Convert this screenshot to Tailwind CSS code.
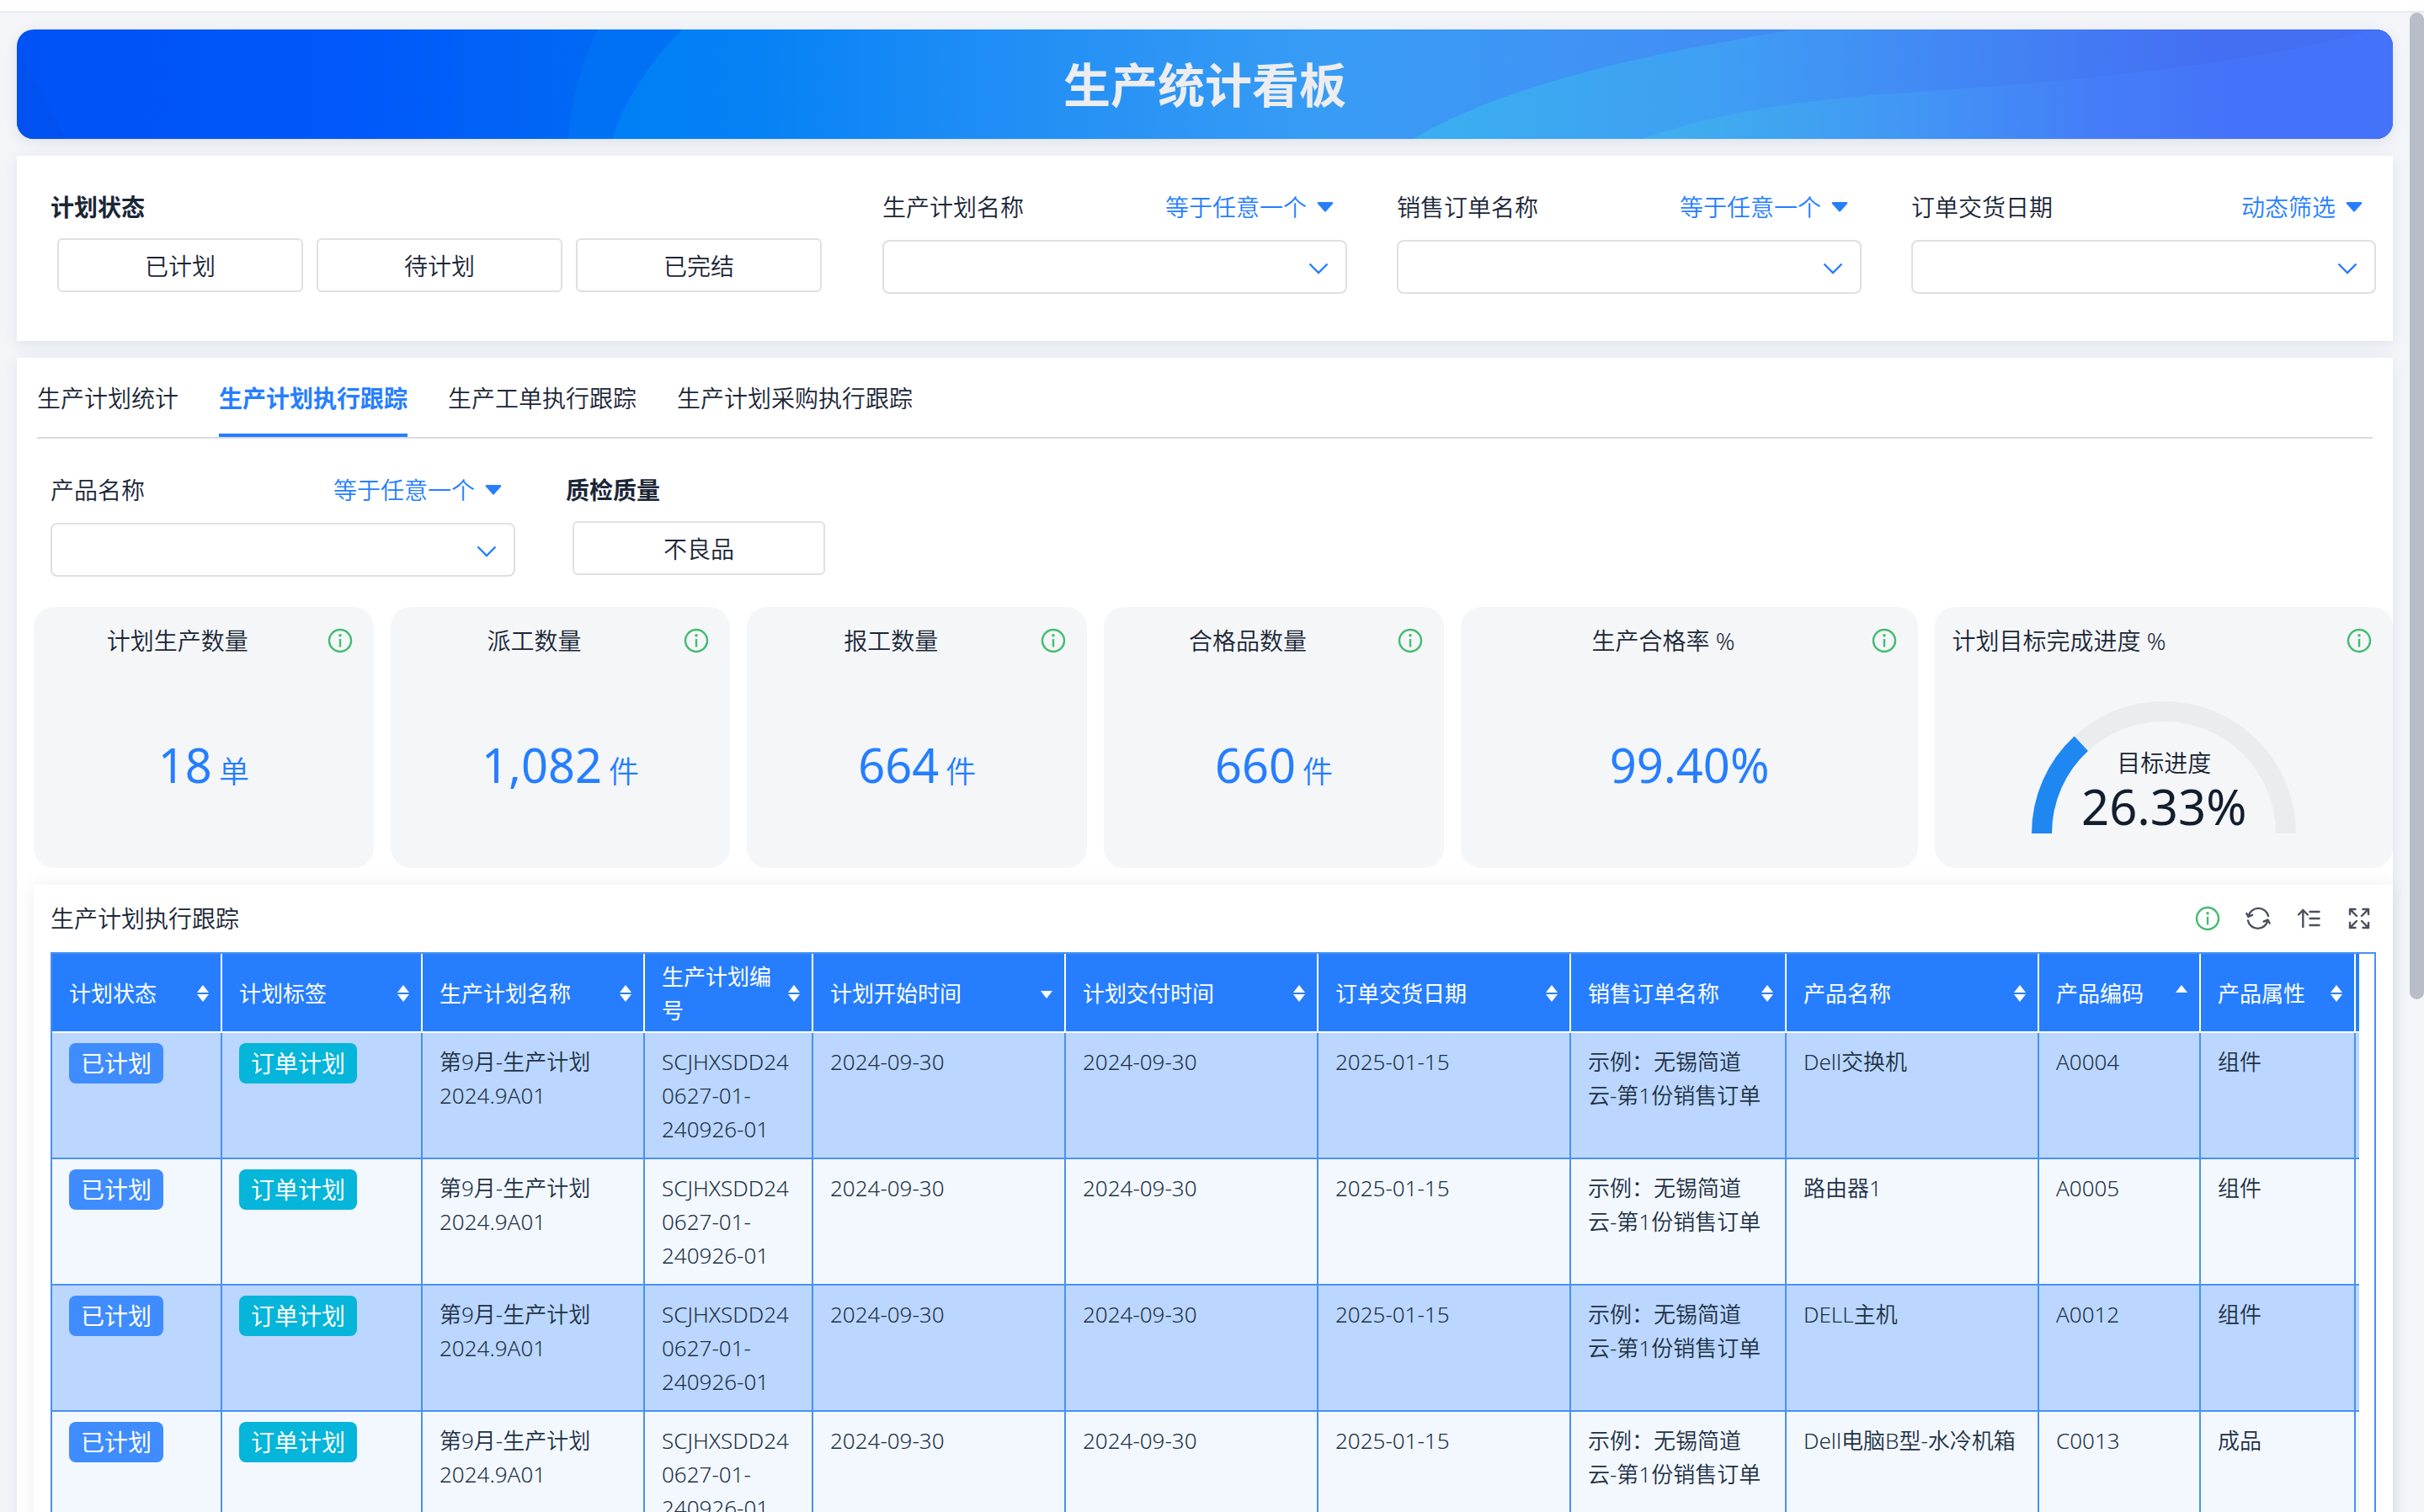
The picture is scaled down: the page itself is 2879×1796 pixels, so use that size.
<!DOCTYPE html>
<html lang="zh-CN">
<head>
<meta charset="utf-8">
<title>生产统计看板</title>
<script src="https://cdn.jsdelivr.net/npm/@tailwindcss/browser@4"></script>
</head>
<body class="h-screen overflow-hidden bg-[#f3f5f9] font-['Noto_Sans','Noto_Sans_CJK_SC',sans-serif] text-[28px] leading-10 font-[350] text-[#1a2636]">

<svg class="hidden">
  <symbol id="info" viewBox="0 0 32 32"><circle cx="16" cy="16" r="13" fill="none" stroke="#45bb72" stroke-width="2.4"/><circle cx="16" cy="9.800" r="1.800" fill="#45bb72"/><path d="M16 14v9.500" stroke="#45bb72" stroke-width="2.400"/></symbol>
  <symbol id="caret" viewBox="0 0 20 12"><path d="M2 0h16q2 0 1 2l-8 9q-1 1-2 0L1 2Q0 0 2 0z" fill="#267eff"/></symbol>
  <symbol id="chevron" viewBox="0 0 24 14"><path d="M1.500 1.500 12 12 22.500 1.500" fill="none" stroke="#267eff" stroke-width="2.400"/></symbol>
  <symbol id="sort" viewBox="0 0 14 20"><path d="M7 0l7 9H0zM7 20l7-9H0z" fill="#fff"/></symbol>
  <symbol id="sort-up" viewBox="0 0 14 20"><path d="M7 0l7 9H0z" fill="#fff"/></symbol>
  <symbol id="sort-down" viewBox="0 0 14 20"><path d="M7 16l7-9H0z" fill="#fff"/></symbol>
</svg>

<header class="h-[15px] border-b-2 border-[#e8e9eb] bg-white"></header>

<main class="flex flex-col gap-5 pt-5 pr-[37px] pl-5">

  <section class="relative flex h-[130px] items-center justify-center overflow-hidden rounded-[20px] shadow-[0_4px_16px_rgba(50,60,110,0.10)]">
    <svg class="absolute inset-0 h-full w-full" viewBox="0 0 2822 130" preserveAspectRatio="none">
      <defs>
        <linearGradient id="g0" gradientUnits="userSpaceOnUse" x1="0" x2="2822" y1="0" y2="0"><stop offset="0" stop-color="#0052f6"/><stop offset=".14" stop-color="#0058fa"/><stop offset=".24" stop-color="#0068f5"/></linearGradient>
        <linearGradient id="g1" gradientUnits="userSpaceOnUse" x1="700" x2="2822" y1="0" y2="0"><stop offset="0" stop-color="#007ff6"/><stop offset=".08" stop-color="#0581f5"/><stop offset=".2" stop-color="#1d8cf5"/><stop offset=".4" stop-color="#389cf5"/><stop offset=".55" stop-color="#4093f5"/><stop offset="1" stop-color="#456ef3"/></linearGradient>
        <linearGradient id="g2" gradientUnits="userSpaceOnUse" x1="1660" x2="2600" y1="0" y2="0"><stop offset="0" stop-color="#3aaff0"/><stop offset=".38" stop-color="#3f9ff3"/><stop offset=".68" stop-color="#4287f5"/><stop offset="1" stop-color="#446ff2"/></linearGradient>
        <linearGradient id="g3" gradientUnits="userSpaceOnUse" x1="1930" x2="2640" y1="0" y2="0"><stop offset="0" stop-color="#3faeee"/><stop offset=".12" stop-color="#3fabef"/><stop offset=".45" stop-color="#4296f5"/><stop offset=".75" stop-color="#447ef7"/><stop offset="1" stop-color="#4472f9"/></linearGradient>
      </defs>
      <path d="M0 0H2822V130H0z" fill="url(#g0)"/>
      <path d="M10 40Q32 80 58 130H0V20z" fill="#0051f0"/>
      <path d="M690 0Q660 60 655 130H900V0z" fill="#0071f5"/>
      <path d="M790 0Q730 60 707 130H2822V0z" fill="url(#g1)"/>
      <path d="M1659 130Q1790 50 2114 0H2822V130z" fill="url(#g2)"/>
      <path d="M1930 130C2030 95 2137 82 2260 74S2650 45 2800 0H2822V130z" fill="url(#g3)"/>
    </svg>
    <h1 class="relative text-[56px] leading-[72px] font-bold text-[#ededf0]">生产统计看板</h1>
  </section>

  <section class="flex h-[220px] bg-white pt-[41px] pr-5 pl-10 shadow-[0_4px_16px_rgba(50,60,110,0.10)]">
    <div class="w-[988px] shrink-0">
      <h2 class="font-bold">计划状态</h2>
      <div class="mt-[17px] ml-2 flex gap-4">
        <button class="h-16 w-[292px] rounded-md border-2 border-[#dfe0e2] pt-0.5">已计划</button>
        <button class="h-16 w-[292px] rounded-md border-2 border-[#dfe0e2] pt-0.5">待计划</button>
        <button class="h-16 w-[292px] rounded-md border-2 border-[#dfe0e2] pt-0.5">已完结</button>
      </div>
    </div>
    <div class="grid flex-1 grid-cols-3 gap-[59px]">
      <div>
        <div class="flex justify-between pr-4"><label for="plan">生产计划名称</label><button class="flex items-center gap-3 text-[#267eff]">等于任意一个<svg class="h-3 w-5"><use href="#caret"/></svg></button></div>
        <div class="relative mt-[19px]"><select id="plan" class="block h-16 w-full appearance-none rounded-lg border-2 border-[#dfe0e2] bg-white"></select><svg class="pointer-events-none absolute top-[27px] right-[22px] h-[14px] w-6"><use href="#chevron"/></svg></div>
      </div>
      <div>
        <div class="flex justify-between pr-4"><label for="order">销售订单名称</label><button class="flex items-center gap-3 text-[#267eff]">等于任意一个<svg class="h-3 w-5"><use href="#caret"/></svg></button></div>
        <div class="relative mt-[19px]"><select id="order" class="block h-16 w-full appearance-none rounded-lg border-2 border-[#dfe0e2] bg-white"></select><svg class="pointer-events-none absolute top-[27px] right-[22px] h-[14px] w-6"><use href="#chevron"/></svg></div>
      </div>
      <div>
        <div class="flex justify-between pr-4"><label for="date">订单交货日期</label><button class="flex items-center gap-3 text-[#267eff]">动态筛选<svg class="h-3 w-5"><use href="#caret"/></svg></button></div>
        <div class="relative mt-[19px]"><select id="date" class="block h-16 w-full appearance-none rounded-lg border-2 border-[#dfe0e2] bg-white"></select><svg class="pointer-events-none absolute top-[27px] right-[22px] h-[14px] w-6"><use href="#chevron"/></svg></div>
      </div>
    </div>
  </section>

  <section class="bg-white shadow-[0_4px_16px_rgba(50,60,110,0.10)]">
    <nav class="mx-6 flex gap-12 border-b-2 border-[#d9dbe0]">
      <button class="h-[94px] border-b-4 border-transparent pt-1.5">生产计划统计</button>
      <button class="h-[94px] border-b-4 border-[#267eff] pt-1.5 font-bold text-[#267eff]">生产计划执行跟踪</button>
      <button class="h-[94px] border-b-4 border-transparent pt-1.5">生产工单执行跟踪</button>
      <button class="h-[94px] border-b-4 border-transparent pt-1.5">生产计划采购执行跟踪</button>
    </nav>

    <div class="flex gap-[60px] pt-[41px] pl-10">
      <div class="w-[552px]">
        <div class="flex justify-between pr-4"><label for="product">产品名称</label><button class="flex items-center gap-3 text-[#267eff]">等于任意一个<svg class="h-3 w-5"><use href="#caret"/></svg></button></div>
        <div class="relative mt-[19px]"><select id="product" class="block h-16 w-full appearance-none rounded-lg border-2 border-[#dfe0e2] bg-white"></select><svg class="pointer-events-none absolute top-[27px] right-[22px] h-[14px] w-6"><use href="#chevron"/></svg></div>
      </div>
      <div>
        <h2 class="font-bold">质检质量</h2>
        <button class="mt-[17px] ml-2 h-16 w-[300px] rounded-md border-2 border-[#dfe0e2] pt-0.5">不良品</button>
      </div>
    </div>

    <div class="mt-9 grid grid-cols-[202fr_202fr_202fr_202fr_272fr_272fr] gap-5 pl-5 text-center [&>article]:flex [&>article]:h-[310px] [&>article]:flex-col [&>article]:rounded-3xl [&>article]:bg-[#f4f6f8] [&>article]:pt-5">
      <article>
        <div class="flex items-center pr-6 pl-5"><h3 class="flex-1 pr-[26px]">计划生产数量</h3><svg class="h-8 w-8"><use href="#info"/></svg></div>
        <p class="flex flex-1 items-center justify-center pt-1 text-[56px] font-normal text-[#267eff]"><span>18<small class="ml-2 text-[36px] leading-4 font-[350]">单</small></span></p>
      </article>
      <article>
        <div class="flex items-center pr-6 pl-5"><h3 class="flex-1 pr-[26px]">派工数量</h3><svg class="h-8 w-8"><use href="#info"/></svg></div>
        <p class="flex flex-1 items-center justify-center pt-1 text-[56px] font-normal text-[#267eff]"><span>1,082<small class="ml-2 text-[36px] leading-4 font-[350]">件</small></span></p>
      </article>
      <article>
        <div class="flex items-center pr-6 pl-5"><h3 class="flex-1 pr-[26px]">报工数量</h3><svg class="h-8 w-8"><use href="#info"/></svg></div>
        <p class="flex flex-1 items-center justify-center pt-1 text-[56px] font-normal text-[#267eff]"><span>664<small class="ml-2 text-[36px] leading-4 font-[350]">件</small></span></p>
      </article>
      <article>
        <div class="flex items-center pr-6 pl-5"><h3 class="flex-1 pr-[26px]">合格品数量</h3><svg class="h-8 w-8"><use href="#info"/></svg></div>
        <p class="flex flex-1 items-center justify-center pt-1 text-[56px] font-normal text-[#267eff]"><span>660<small class="ml-2 text-[36px] leading-4 font-[350]">件</small></span></p>
      </article>
      <article>
        <div class="flex items-center pr-6 pl-5"><h3 class="flex-1 pr-[26px]">生产合格率 %</h3><svg class="h-8 w-8"><use href="#info"/></svg></div>
        <p class="flex flex-1 items-center justify-center pt-1 text-[56px] font-normal text-[#267eff]">99.40%</p>
      </article>
      <article>
        <div class="flex items-center pr-6 pl-5"><h3 class="flex-1 text-left">计划目标完成进度 %</h3><svg class="h-8 w-8"><use href="#info"/></svg></div>
        <div class="relative mx-auto mt-[52px] h-[157px] w-[314px] text-[#141d2e]">
          <svg class="absolute inset-0 h-full w-full" viewBox="0 0 314 157" fill="none" stroke-width="24"><path d="M12 157A145 145 0 0 1 302 157" stroke="#ebecee"/><path d="M12 157A145 145 0 0 1 302 157" pathLength="100" stroke="#1f87f2" stroke-dasharray="26.33 100"/></svg>
          <p class="relative pt-[53px]">目标进度</p>
          <p class="relative pt-1 text-[58px] leading-14 font-normal">26.33%</p>
        </div>
      </article>
    </div>

    <section class="mt-5 ml-5 bg-white px-5 shadow-[0_0_20px_rgba(50,40,90,0.08)]">
      <div class="flex h-20 items-center gap-7 pr-1">
        <h2 class="flex-1">生产计划执行跟踪</h2>
        <button aria-label="说明"><svg class="h-8 w-8"><use href="#info"/></svg></button>
        <button aria-label="刷新"><svg class="h-8 w-8" viewBox="0 0 32 32" fill="none" stroke="#4b505c" stroke-width="2.400" stroke-linecap="round" stroke-linejoin="round"><path d="M4.700 13A12 12 0 0 1 28 13M3.900 18.500A12 12 0 0 0 27.300 18.500M2.300 10l2 4 4.700-2.200M29.700 21.500l-2.300-4-4.700 2.200"/></svg></button>
        <button aria-label="排序"><svg class="h-8 w-8" viewBox="0 0 32 32" fill="none" stroke="#4b505c" stroke-width="2.400" stroke-linecap="round" stroke-linejoin="round"><path d="M9.300 26V6M4 11.500 9.300 6l5.500 5.500M17.500 8h11M17.500 16h11M17.500 24h11"/></svg></button>
        <button aria-label="全屏"><svg class="h-8 w-8" viewBox="0 0 32 32" fill="none" stroke="#4b505c" stroke-width="2.400" stroke-linecap="round" stroke-linejoin="round"><path d="M5 11V5h6.500M20.500 5H27v6M27 21v6h-6.500M11.500 27H5v-6M5 5l8 8M27 5l-8 8M27 27l-8-8M5 27l8-8"/></svg></button>
      </div>
      <div class="border-2 border-[#4a8ff3] pr-[18px]">
        <table class="w-full table-fixed border-separate border-spacing-0 text-left text-[26px] text-[#203044] [&_tbody_td]:h-[150px] [&_tbody_td]:border-r-2 [&_tbody_td]:border-b-2 [&_tbody_td]:border-[#4a90f3] [&_td]:px-5 [&_td]:pt-[14px] [&_td]:align-top [&_td:last-child]:border-r-0 [&_td:last-child]:p-0 [&_td:nth-child(-n+2)]:pt-3 [&_th]:h-[94px] [&_th]:border-r-2 [&_th]:border-b-2 [&_th]:border-white [&_th]:pt-0.5 [&_th]:pr-[14px] [&_th]:pl-5 [&_th]:font-normal [&_th>div]:flex [&_th>div]:items-center [&_th>div]:justify-between [&_th:last-child]:border-r-0 [&_th:last-child]:p-0 [&_th_svg]:h-5 [&_th_svg]:w-[14px] [&_th_svg]:shrink-0 [&_mark]:inline-block [&_mark]:h-12 [&_mark]:rounded-lg [&_mark]:px-[14px] [&_mark]:text-[28px] [&_mark]:leading-12 [&_mark]:font-normal [&_mark]:text-white">
          <colgroup><col class="w-[202px]"><col class="w-[238px]"><col class="w-[264px]"><col class="w-[200px]"><col class="w-[300px]"><col class="w-[300px]"><col class="w-[300px]"><col class="w-[256px]"><col class="w-[300px]"><col class="w-[192px]"><col class="w-[184px]"><col></colgroup>
          <thead class="bg-[#267eff] text-white">
            <tr>
              <th><div>计划状态<svg><use href="#sort"/></svg></div></th>
              <th><div>计划标签<svg><use href="#sort"/></svg></div></th>
              <th><div>生产计划名称<svg><use href="#sort"/></svg></div></th>
              <th><div>生产计划编号<svg><use href="#sort"/></svg></div></th>
              <th><div>计划开始时间<svg><use href="#sort-down"/></svg></div></th>
              <th><div>计划交付时间<svg><use href="#sort"/></svg></div></th>
              <th><div>订单交货日期<svg><use href="#sort"/></svg></div></th>
              <th><div>销售订单名称<svg><use href="#sort"/></svg></div></th>
              <th><div>产品名称<svg><use href="#sort"/></svg></div></th>
              <th><div>产品编码<svg><use href="#sort-up"/></svg></div></th>
              <th><div>产品属性<svg><use href="#sort"/></svg></div></th>
              <th></th>
            </tr>
          </thead>
          <tbody>
            <tr class="bg-[#bbd7ff]">
              <td><mark class="bg-[#3f8cff]">已计划</mark></td><td><mark class="bg-[#05b5da]">订单计划</mark></td><td>第9月-生产计划<br>2024.9A01</td><td>SCJHXSDD24<br>0627-01-<br>240926-01</td><td>2024-09-30</td><td>2024-09-30</td><td>2025-01-15</td><td class="whitespace-nowrap">示例：无锡简道<br>云-第1份销售订单</td><td>Dell交换机</td><td>A0004</td><td>组件</td><td></td>
            </tr>
            <tr class="bg-[#f3f8ff]">
              <td><mark class="bg-[#3f8cff]">已计划</mark></td><td><mark class="bg-[#05b5da]">订单计划</mark></td><td>第9月-生产计划<br>2024.9A01</td><td>SCJHXSDD24<br>0627-01-<br>240926-01</td><td>2024-09-30</td><td>2024-09-30</td><td>2025-01-15</td><td class="whitespace-nowrap">示例：无锡简道<br>云-第1份销售订单</td><td>路由器1</td><td>A0005</td><td>组件</td><td></td>
            </tr>
            <tr class="bg-[#bbd7ff]">
              <td><mark class="bg-[#3f8cff]">已计划</mark></td><td><mark class="bg-[#05b5da]">订单计划</mark></td><td>第9月-生产计划<br>2024.9A01</td><td>SCJHXSDD24<br>0627-01-<br>240926-01</td><td>2024-09-30</td><td>2024-09-30</td><td>2025-01-15</td><td class="whitespace-nowrap">示例：无锡简道<br>云-第1份销售订单</td><td>DELL主机</td><td>A0012</td><td>组件</td><td></td>
            </tr>
            <tr class="bg-[#f3f8ff]">
              <td><mark class="bg-[#3f8cff]">已计划</mark></td><td><mark class="bg-[#05b5da]">订单计划</mark></td><td>第9月-生产计划<br>2024.9A01</td><td>SCJHXSDD24<br>0627-01-<br>240926-01</td><td>2024-09-30</td><td>2024-09-30</td><td>2025-01-15</td><td class="whitespace-nowrap">示例：无锡简道<br>云-第1份销售订单</td><td class="whitespace-nowrap">Dell电脑B型-水冷机箱</td><td>C0013</td><td>成品</td><td></td>
            </tr>
          </tbody>
        </table>
      </div>
    </section>
  </section>
</main>

<div class="absolute top-[15px] right-0 h-[1172px] w-[17px] rounded-full bg-[#b9bdc7]"></div>
</body>
</html>
